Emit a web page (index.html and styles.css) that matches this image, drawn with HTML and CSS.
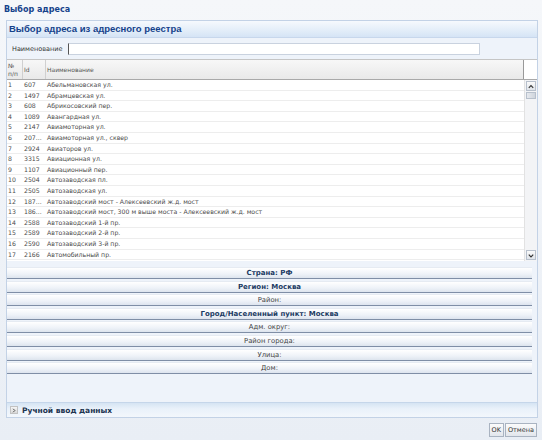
FILE: index.html
```html
<!DOCTYPE html>
<html lang="ru">
  <head>
    <meta charset="UTF-8" />
    <title>Выбор адреса</title>
    <link rel="stylesheet" href="styles.css">
  </head>
  <body>
    <div class="window">
      <div class="window-title">Выбор адреса</div>

      <div class="panel">
        <div class="panel-header">Выбор адреса из адресного реестра</div>

        <div class="search-row">
          <label class="search-label">Наименование</label>
          <input class="search-input" type="text" />
        </div>

        <div class="grid">
          <div class="grid-head">
            <div class="col col-num">№<br />п/п</div>
            <div class="col col-id">Id</div>
            <div class="col col-name">Наименование</div>
            <div class="head-filler"></div>
          </div>
          <div class="grid-body">
            <div class="rows" id="rows"></div>
            <div class="vscroll">
              <div class="scroll-btn">
                <svg width="9" height="7" viewBox="0 0 9 7"><path d="M2 5 L4.5 2.5 L7 5" fill="none" stroke="#333" stroke-width="1.3"/></svg>
              </div>
              <div class="scroll-thumb"></div>
              <div class="scroll-track"></div>
              <div class="scroll-btn">
                <svg width="9" height="7" viewBox="0 0 9 7"><path d="M2 2.5 L4.5 5 L7 2.5" fill="none" stroke="#333" stroke-width="1.3"/></svg>
              </div>
            </div>
          </div>
        </div>

        <div class="levels">
          <div class="level bold">Страна: РФ</div>
          <div class="level bold">Регион: Москва</div>
          <div class="level">Район:</div>
          <div class="level bold">Город/Населенный пункт: Москва</div>
          <div class="level">Адм. округ:</div>
          <div class="level">Район города:</div>
          <div class="level">Улица:</div>
          <div class="level">Дом:</div>
        </div>

        <div class="spacer"></div>

        <div class="manual-header">
          <span class="toggle">
            <svg width="7" height="7" viewBox="0 0 7 7"><path d="M2.5 1.5 L4.5 3.5 L2.5 5.5" fill="none" stroke="#444" stroke-width="1.1"/></svg>
          </span>
          Ручной ввод данных
        </div>
        <div class="manual-body"></div>
      </div>

      <div class="footer">
        <button class="btn">OK</button>
        <button class="btn">Отмена</button>
      </div>
    </div>

    <script>
      const streets = [
        [1, '607', 'Абельмановская ул.'],
        [2, '1497', 'Абрамцевская ул.'],
        [3, '608', 'Абрикосовский пер.'],
        [4, '1089', 'Авангардная ул.'],
        [5, '2147', 'Авиамоторная ул.'],
        [6, '207...', 'Авиамоторная ул., сквер'],
        [7, '2924', 'Авиаторов ул.'],
        [8, '3315', 'Авиационная ул.'],
        [9, '1107', 'Авиационный пер.'],
        [10, '2504', 'Автозаводская пл.'],
        [11, '2505', 'Автозаводская ул.'],
        [12, '187...', 'Автозаводский мост - Алексеевский ж.д. мост'],
        [13, '186...', 'Автозаводский мост, 300 м выше моста - Алексеевский ж.д. мост'],
        [14, '2588', 'Автозаводский 1-й пр.'],
        [15, '2589', 'Автозаводский 2-й пр.'],
        [16, '2590', 'Автозаводский 3-й пр.'],
        [17, '2166', 'Автомобильный пр.']
      ];

      const rows = document.getElementById('rows');
      streets.forEach(([n, id, name]) => {
        const row = document.createElement('div');
        row.className = 'row';
        row.innerHTML =
          '<div class="cell col-num">' + n + '</div>' +
          '<div class="cell col-id">' + id + '</div>' +
          '<div class="cell col-name">' + name + '</div>';
        rows.appendChild(row);
      });
    </script>
  </body>
</html>
```

FILE: styles.css
```css
* {
  margin: 0;
  padding: 0;
  box-sizing: border-box;
}

body {
  font-family: 'DejaVu Sans', Tahoma, sans-serif;
  background: #e8edf4;
  overflow: hidden;
}

.window {
  width: 542px;
  height: 440px;
  display: flex;
  flex-direction: column;
  background: linear-gradient(180deg, #f5f7fa 0%, #e9eef5 100%);
}

.window-title {
  height: 20px;
  padding: 4px 0 0 4px;
  line-height: 12px;
  font-size: 8px;
  font-weight: bold;
  color: #15428b;
}

.panel {
  flex: 1;
  margin: 0 4px 0 6px;
  border: 1px solid #c3d2e6;
  background: #eef3fa;
  display: flex;
  flex-direction: column;
}

.panel-header {
  height: 17px;
  padding-left: 2px;
  line-height: 16px;
  font-family: 'Liberation Sans', Arial, sans-serif;
  font-size: 9.5px;
  font-weight: bold;
  color: #15428b;
  background: linear-gradient(180deg, #f6f9fd 0%, #e4eef9 55%, #d5e4f5 100%);
  border-bottom: 1px solid #c7d7ec;
}

.search-row {
  height: 21px;
  display: flex;
  align-items: center;
  padding-left: 5px;
}

.search-label {
  width: 56px;
  font-size: 6.5px;
  color: #333;
}

.search-input {
  width: 412px;
  height: 12px;
  border: 1px solid #c9d2df;
  border-left: 1px solid #555;
  background: #fff;
  outline: none;
}

.grid {
  height: 202px;
  display: flex;
  flex-direction: column;
  background: #fff;
}

.grid-head {
  height: 21px;
  display: flex;
  background: linear-gradient(180deg, #f7f7f7 0%, #e9e9e9 100%);
  border-top: 1px solid #c5c5c5;
  border-bottom: 1px solid #a9a9a9;
}

.grid-head .col {
  font-size: 6px;
  line-height: 8px;
  color: #555;
  border-right: 1px solid #d0d0d0;
  display: flex;
  align-items: center;
  padding-left: 1px;
}

.grid-head .col-name {
  flex: 1;
  border-right: 1px solid #999;
}

.head-filler {
  width: 13px;
  background: #fff;
}

.col-num {
  width: 16px;
}

.col-id {
  width: 23px;
}

.grid-body {
  flex: 1;
  display: flex;
  min-height: 0;
}

.rows {
  flex: 1;
  overflow: hidden;
}

.row {
  height: 10.6px;
  display: flex;
  border-bottom: 1px solid #ededed;
}

.cell {
  font-size: 6.2px;
  line-height: 10px;
  color: #4a4a4a;
  padding-left: 1px;
  white-space: nowrap;
}

.cell.col-name {
  flex: 1;
}

.vscroll {
  width: 13px;
  display: flex;
  flex-direction: column;
  background: #f3f4f6;
  border-left: 1px solid #e2e2e2;
}

.scroll-btn {
  height: 10px;
  margin: 1px;
  display: flex;
  align-items: center;
  justify-content: center;
  background: linear-gradient(180deg, #fafafa, #dfe4ea);
  border: 1px solid #b7c0cc;
}

.scroll-thumb {
  height: 7px;
  margin: 0 1px;
  background: linear-gradient(90deg, #e6e9ee, #cfd5dd);
  border: 1px solid #b7c0cc;
}

.scroll-track {
  flex: 1;
}

.levels {
  padding: 6px 5px 0 0;
}

.level {
  height: 12px;
  margin-bottom: 1.6px;
  font-size: 6.8px;
  line-height: 11px;
  text-align: center;
  color: #444;
  background: linear-gradient(180deg, #ffffff 0%, #eef2f8 60%, #dde4ee 100%);
  border-top: 1px solid #e6ebf2;
  border-bottom: 1px solid #7f8ea6;
}

.level.bold {
  font-weight: bold;
  color: #1c3b63;
  font-size: 7px;
}

.spacer {
  flex: 1;
}

.manual-header {
  height: 15px;
  display: flex;
  align-items: center;
  gap: 4px;
  padding-left: 3px;
  font-size: 7.5px;
  font-weight: bold;
  color: #1c3450;
  background: linear-gradient(180deg, #d5e4f3 0%, #e9f1fa 40%, #f3f7fc 100%);
  border-top: 1px solid #c5d6ea;
}

.toggle {
  width: 8px;
  height: 8px;
  display: flex;
  align-items: center;
  justify-content: center;
  background: linear-gradient(180deg, #f5f5f5, #d9d9d9);
  border: 1px solid #c2c2c2;
}

.manual-body {
  height: 0;
}

.footer {
  height: 22px;
  display: flex;
  justify-content: flex-end;
  align-items: center;
  gap: 1px;
  padding: 2px 5px 0 0;
}

.btn {
  height: 14px;
  padding: 0 2px;
  font-family: 'DejaVu Sans', Tahoma, sans-serif;
  font-size: 6.5px;
  color: #333;
  background: linear-gradient(180deg, #fbfbfb, #e2e6ec);
  border: 1px solid #a9b3c1;
}
```
